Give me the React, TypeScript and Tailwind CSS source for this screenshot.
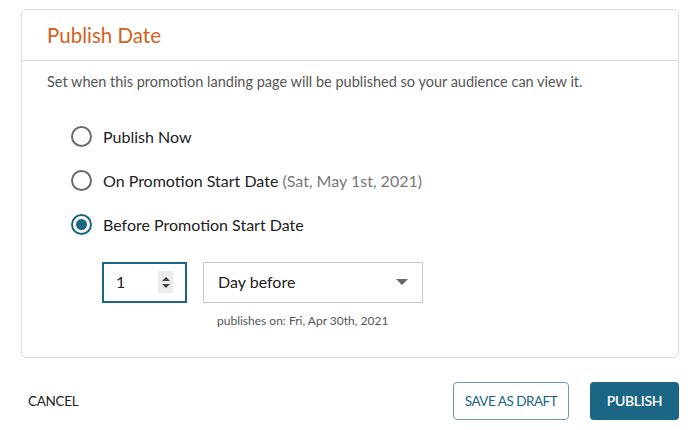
import { useState } from 'react';

const options = [
    { id: 'now', label: 'Publish Now' },
    { id: 'start', label: 'On Promotion Start Date', note: '(Sat, May 1st, 2021)' },
    { id: 'before', label: 'Before Promotion Start Date' },
];

function Radio({ checked }: { checked: boolean }) {
    if (checked) {
        return (
            <span className="flex h-[21px] w-[21px] items-center justify-center rounded-full border-2 border-[#1b6585]">
                <span className="h-[11px] w-[11px] rounded-full bg-[#1b6585]" />
            </span>
        );
    }
    return <span className="h-[21px] w-[21px] rounded-full border-2 border-[#6b6b6b]" />;
}

export default function App() {
    const [selected, setSelected] = useState('before');

    return (
        <div className="h-[430px] w-[700px] bg-white font-['Lato','Noto_Sans',sans-serif] text-[#222]">
            <div className="px-[21px] pt-[9px]">
                <section className="rounded-[5px] border border-[#dcdcdc]">
                    <header className="flex h-[51px] items-center border-b border-[#dcdcdc] px-[25px]">
                        <h2 className="text-[20.5px] text-[#d4611c]">Publish Date</h2>
                    </header>
                    <div className="px-[25px] pb-[27px] pt-[10px]">
                        <p className="text-[14.5px] text-[#555]">
                            Set when this promotion landing page will be published so your audience can view it.
                        </p>
                        <div className="mt-[33px] flex flex-col gap-[22px] pl-[24px]">
                            {options.map((o) => (
                                <label
                                    key={o.id}
                                    className="flex h-[22px] cursor-pointer items-center gap-[11px] text-[16px]"
                                    onClick={() => setSelected(o.id)}
                                >
                                    <Radio checked={selected === o.id} />
                                    <span>
                                        {o.label}
                                        {o.note && <span className="text-[#777]"> {o.note}</span>}
                                    </span>
                                </label>
                            ))}
                        </div>
                        <div className="mt-[26px] flex gap-[16px] pl-[55px]">
                            <div className="flex h-[41px] w-[85px] items-center justify-between border-2 border-[#1b6585] pl-[12px] pr-[12px]">
                                <span className="text-[16px]">1</span>
                                <span className="flex h-[22px] w-[15px] flex-col items-center justify-center gap-[3px] bg-[#ececec]">
                                    <span className="h-0 w-0 border-x-[4px] border-b-[4px] border-x-transparent border-b-[#444]" />
                                    <span className="h-0 w-0 border-x-[4px] border-t-[4px] border-x-transparent border-t-[#444]" />
                                </span>
                            </div>
                            <div>
                                <div className="flex h-[41px] w-[220px] items-center justify-between border border-[#c8c8c8] pl-[14px] pr-[14px]">
                                    <span className="text-[16px]">Day before</span>
                                    <span className="h-0 w-0 border-x-[6px] border-t-[6px] border-x-transparent border-t-[#666]" />
                                </div>
                                <p className="mt-[9px] pl-[14px] text-[12px] text-[#555]">publishes on: Fri, Apr 30th, 2021</p>
                            </div>
                        </div>
                    </div>
                </section>
            </div>
            <footer className="mt-[24px] flex items-center justify-between pl-[28px] pr-[21px]">
                <button className="text-[13.5px] tracking-[-0.3px] text-[#222]">CANCEL</button>
                <div className="flex gap-[21px]">
                    <button className="h-[38px] w-[116px] rounded-[4px] border border-[#6a9bb1] text-[13.5px] tracking-[-0.5px] text-[#1b6585]">
                        SAVE AS DRAFT
                    </button>
                    <button className="h-[38px] w-[89px] rounded-[4px] bg-[#1b6585] text-[14px] font-semibold tracking-[-0.3px] text-white">
                        PUBLISH
                    </button>
                </div>
            </footer>
        </div>
    );
}
